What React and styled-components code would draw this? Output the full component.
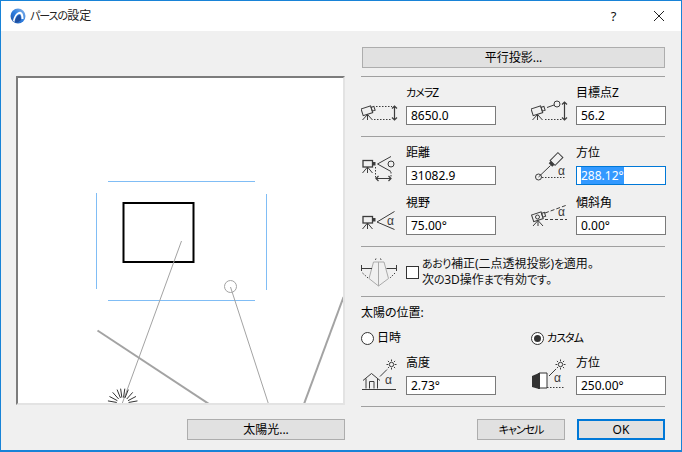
import React, { useEffect, useRef } from "react";
import styled, { createGlobalStyle } from "styled-components";

const Global = createGlobalStyle`
  html, body { margin: 0; padding: 0; background: #f0f0f0; }
  * { box-sizing: border-box; }
  body { font-family: "Noto Sans", "Noto Sans CJK JP", sans-serif; font-size: 12px; color: #000; font-feature-settings: "palt"; }
`;

const Window = styled.div`
  width: 682px; height: 452px; border: 1px solid #1883d7; border-bottom-width: 2px;
  display: flex; flex-direction: column; background: #f0f0f0; overflow: hidden;
`;
const TitleBar = styled.header`
  height: 30px; background: #fff; display: flex; align-items: center; flex: none; padding-left: 9px;
`;
const Title = styled.span`
  margin-left: 4px; flex: 1; color: #222; line-height: 16px;
`;
const Kana = styled.span`
  font-size: 11px; letter-spacing: ${p => p.$s ?? -1}px;
`;
const WinButton = styled.button`
  width: 45px; height: 30px; border: 0; background: none; padding: 0; display: flex;
  align-items: center; justify-content: center; font: inherit; font-size: 13px; color: #111;
`;
const Body = styled.div`
  flex: 1; display: flex; min-height: 0;
`;
const LeftColumn = styled.section`
  width: 344px; flex: none; padding: 45px 0 0 15px; display: flex; flex-direction: column;
`;
const Preview = styled.div`
  width: 329px; height: 329px; background: #fff; border: 2px solid;
  border-color: #7c7c7c #e3e3e3 #e3e3e3 #7c7c7c; flex: none;
  svg { display: block; }
`;
const LeftFooter = styled.div`
  margin-top: 14px; display: flex; justify-content: flex-end;
`;
const PushButton = styled.button`
  width: ${p => p.$w}px; height: 21px; flex: none; padding: 0; font: inherit; color: #000;
  background: #e1e1e1; border: ${p => (p.$primary ? "2px solid #0078d7" : "1px solid #adadad")};
  display: block; line-height: 16px;
`;
const RightColumn = styled.section`
  width: 305px; margin-left: 16px; flex: none; padding-top: 16px; display: flex; flex-direction: column;
`;
const TopButton = styled(PushButton)`
  margin-left: 1px;
`;
const Divider = styled.hr`
  width: 304px; height: 1px; border: 0; background: #a0a0a0; margin: ${p => p.$top}px 0 0; flex: none;
`;
const FieldGrid = styled.div`
  display: grid; grid-template-columns: 170px 135px; row-gap: ${p => p.$gap || 0}px;
`;
const Field = styled.div`
  display: grid; grid-template-columns: 45px 90px; grid-template-rows: ${p => p.$label || 29}px 19px;
`;
const IconSlot = styled.div`
  grid-column: 1; grid-row: 1 / 3; align-self: end; height: 40px;
  svg { display: block; }
`;
const FieldLabel = styled.label`
  grid-column: 2; grid-row: 1; align-self: end; line-height: 16px; padding-bottom: 5px;
`;
const NumberInput = styled.input`
  grid-column: 2; grid-row: 2; width: 90px; height: 19px; background: #fff; border: 1px solid #7a7a7a;
  padding: 0 3px 0 4px; font: inherit; color: #000; outline: none; border-radius: 0;
  &:focus { border-color: #0078d7; }
  &::selection { background: #3399ff; color: #fff; }
`;
const TiltRow = styled.div`
  height: 49px; display: flex; align-items: center;
  svg { display: block; flex: none; }
`;
const CheckBox = styled.span`
  width: 13px; height: 13px; border: 1px solid #333; background: #fff; flex: none; margin-left: 9px; margin-top: 1px;
`;
const TiltText = styled.div`
  margin-left: 3px; line-height: 16px; color: #111; white-space: nowrap;
`;
const SectionLabel = styled.div`
  margin-top: 8px; height: 16px; line-height: 16px;
`;
const RadioRow = styled.div`
  margin-top: 9px; display: grid; grid-template-columns: 170px 135px; height: 16px;
`;
const Radio = styled.label`
  display: flex; align-items: center; gap: 3px; line-height: 16px;
`;
const RadioMark = styled.span`
  width: 13px; height: 13px; border-radius: 50%; border: 1px solid #333; background: #fff;
  display: flex; align-items: center; justify-content: center; flex: none;
  &::after { content: ""; width: 7px; height: 7px; border-radius: 50%; background: ${p => (p.$on ? "#333" : "transparent")}; }
`;
const Footer = styled.div`
  margin-top: 12px; width: 304px; display: flex; justify-content: flex-end; gap: 12px;
`;

const stroke = { fill: "none", stroke: "#3c3c3c", strokeWidth: 1 };
const dotted = { ...stroke, strokeDasharray: "1.5 1.5" };

const Alpha = ({ x, y }) => (
  <text x={x} y={y} fontSize="12" fontFamily="Liberation Sans, sans-serif" fill="#3c3c3c" textAnchor="middle">α</text>
);

const FieldIcon = ({ x, bottom, children }) => (
  <svg width="45" height="40" viewBox={`${x} ${bottom - 40} 45 40`}>{children}</svg>
);

const Tripod = ({ x, y, h }) => (
  <g {...stroke}>
    <path d={`M${x} ${y}V${y + h}M${x} ${y}L${x - 5} ${y + h}M${x} ${y}L${x + 5} ${y + h}`} />
  </g>
);

const StraightCam = ({ y }) => (
  <g>
    <rect x="363" y={y} width="9.5" height="6.5" {...stroke} strokeWidth="1.3" />
    <rect x="373" y={y + 1.5} width="2.5" height="3.5" fill="#3c3c3c" />
    <Tripod x={367.5} y={y + 6.5} h={6} />
  </g>
);

const Arrows = ({ x, y1, y2 }) => (
  <path d={`M${x} ${y1}V${y2}M${x - 2.5} ${y1 + 2.5}L${x} ${y1}L${x + 2.5} ${y1 + 2.5}M${x - 2.5} ${y2 - 2.5}L${x} ${y2}L${x + 2.5} ${y2 - 2.5}`} {...stroke} strokeWidth="1.2" />
);

const TiltedCam = ({ x, y }) => (
  <g>
    <g transform={`rotate(-18 ${x + 6} ${y + 4})`}>
      <rect x={x} y={y} width="10" height="7" {...stroke} fill="#f0f0f0" />
      <rect x={x + 10} y={y + 1.5} width="3" height="4" {...stroke} />
    </g>
    <Tripod x={x + 5.5} y={y + 7.5} h={5.5} />
  </g>
);

const Sun = ({ cx, cy }) => (
  <g {...stroke}>
    <circle cx={cx} cy={cy} r="2.2" />
    <path d={`M${cx} ${cy - 5}V${cy - 3.2}M${cx} ${cy + 3.2}V${cy + 5}M${cx - 5} ${cy}H${cx - 3.2}M${cx + 3.2} ${cy}H${cx + 5}M${cx - 3.6} ${cy - 3.6}L${cx - 2.4} ${cy - 2.4}M${cx + 3.6} ${cy - 3.6}L${cx + 2.4} ${cy - 2.4}M${cx - 3.6} ${cy + 3.6}L${cx - 2.4} ${cy + 2.4}M${cx + 3.6} ${cy + 3.6}L${cx + 2.4} ${cy + 2.4}`} />
  </g>
);

const rays = [-80, -62, -42, -22, -8, 8, 22, 42, 62, 80].map(a => {
  const r = (a * Math.PI) / 180;
  return [Math.sin(r), -Math.cos(r)];
});

const Logo = () => (
  <svg width="16" height="16" viewBox="0 0 16 16">
    <defs>
      <linearGradient id="lg" x1="0" y1="1" x2="1" y2="0">
        <stop offset="0" stopColor="#1f4f9f" />
        <stop offset="0.5" stopColor="#2f7fe0" />
        <stop offset="1" stopColor="#8fb8e8" />
      </linearGradient>
    </defs>
    <circle cx="8" cy="8" r="7.5" fill="url(#lg)" />
    <path d="M3 13C4 7 8 3 11 4C13 5 13.5 8 13.5 11L11.5 11C11.5 8 11 6 9.5 6C7 6 5 10 4.5 14Z" fill="#fff" />
    <path d="M5 14C6 9 8 7 9.5 7C10.5 7 11 9 11 12C9 14 7 15 5 14Z" fill="#1f4f9f" />
  </svg>
);

const Scene = () => (
  <svg width="325" height="325" viewBox="18 78 325 325">
    <g stroke="#80bdf5" strokeWidth="1" fill="none">
      <path d="M108 181.5H255M108 300.5H255M96.5 193V289M266.5 194V290" />
    </g>
    <rect x="123.5" y="203" width="70" height="59" fill="none" stroke="#000" strokeWidth="2" />
    <g stroke="#a3a3a3" fill="none">
      <path d="M181.5 241L122 404" strokeWidth="1" />
      <circle cx="230.5" cy="286.5" r="6" strokeWidth="1" />
      <path d="M230.5 287L268.5 404" strokeWidth="1" />
      <path d="M97.5 330.5L209 404" strokeWidth="2" />
      <path d="M343.5 297L304 404" strokeWidth="2" />
    </g>
    <g stroke="#333" strokeWidth="1">
      {rays.map(([dx, dy], i) => (
        <line key={i} x1={122.7 + dx * 6} y1={403.5 + dy * 6} x2={122.7 + dx * 15} y2={403.5 + dy * 15} />
      ))}
    </g>
  </svg>
);

export default function App() {
  const focused = useRef(null);
  useEffect(() => {
    focused.current.focus();
    focused.current.select();
  }, []);
  return (
    <Window>
      <Global />
      <TitleBar>
        <Logo />
        <Title><Kana>パースの</Kana>設定</Title>
        <WinButton>?</WinButton>
        <WinButton>
          <svg width="12" height="12" viewBox="0 0 12 12"><path d="M1 1L11 11M11 1L1 11" stroke="#222" strokeWidth="1" /></svg>
        </WinButton>
      </TitleBar>
      <Body>
        <LeftColumn>
          <Preview><Scene /></Preview>
          <LeftFooter><PushButton $w={158}>太陽光...</PushButton></LeftFooter>
        </LeftColumn>
        <RightColumn>
          <TopButton $w={303}>平行投影...</TopButton>
          <Divider $top={8} />
          <FieldGrid>
            <Field>
              <IconSlot>
                <FieldIcon x={361} bottom={125}>
                  <TiltedCam x={362} y={107} />
                  <path d="M376 106.5H392M374 119.5H392" {...dotted} />
                  <Arrows x={394.5} y1={106} y2={120} />
                </FieldIcon>
              </IconSlot>
              <FieldLabel><Kana>カメラ</Kana>Z</FieldLabel>
              <NumberInput readOnly value="8650.0" />
            </Field>
            <Field>
              <IconSlot>
                <FieldIcon x={531} bottom={125}>
                  <TiltedCam x={532} y={107} />
                  <path d="M547 107.5L554 105" {...stroke} />
                  <circle cx="557" cy="104" r="3" {...stroke} />
                  <path d="M545 119.5H562" {...dotted} />
                  <Arrows x={564.5} y1={102} y2={120} />
                </FieldIcon>
              </IconSlot>
              <FieldLabel>目標点Z</FieldLabel>
              <NumberInput readOnly value="56.2" />
            </Field>
          </FieldGrid>
          <Divider $top={11} />
          <FieldGrid $gap={2}>
            <Field>
              <IconSlot>
                <FieldIcon x={361} bottom={185}>
                  <StraightCam y={160.5} />
                  <path d="M377.5 164L391 156.5M377.5 164L391 171.5" {...stroke} />
                  <circle cx="391" cy="164" r="3" {...stroke} />
                  <path d="M375.5 167V178M391 172V178" {...dotted} />
                  <path d="M376 178.5H391M378.5 176L376 178.5L378.5 181M388.5 176L391 178.5L388.5 181" {...stroke} strokeWidth="1.2" />
                </FieldIcon>
              </IconSlot>
              <FieldLabel>距離</FieldLabel>
              <NumberInput readOnly value="31082.9" />
            </Field>
            <Field>
              <IconSlot>
                <FieldIcon x={531} bottom={185}>
                  <circle cx="538.5" cy="177" r="3" {...stroke} />
                  <path d="M538.5 177L550.5 165.5" {...stroke} />
                  <path d="M542 177.5H566" {...dotted} />
                  <g transform="rotate(45 556.5 159)">
                    <rect x="553" y="153.5" width="7" height="11" {...stroke} fill="#f0f0f0" />
                    <rect x="554" y="164.5" width="5" height="3" fill="#3c3c3c" />
                  </g>
                  <Alpha x={561.5} y={175} />
                </FieldIcon>
              </IconSlot>
              <FieldLabel>方位</FieldLabel>
              <NumberInput ref={focused} readOnly value="288.12°" />
            </Field>
            <Field>
              <IconSlot>
                <FieldIcon x={361} bottom={235}>
                  <StraightCam y={216.5} />
                  <path d="M377 222L394.5 211.5M377 222L394.5 229.5" {...stroke} />
                  <Alpha x={390.5} y={225} />
                </FieldIcon>
              </IconSlot>
              <FieldLabel>視野</FieldLabel>
              <NumberInput readOnly value="75.00°" />
            </Field>
            <Field>
              <IconSlot>
                <FieldIcon x={531} bottom={235}>
                  <TiltedCam x={532.5} y={213} />
                  <circle cx="537.5" cy="217" r="2" {...stroke} />
                  <path d="M545 213L567 205" {...stroke} strokeDasharray="4 2" />
                  <path d="M545 219.5H567" {...stroke} strokeDasharray="3 2" />
                  <Alpha x={561.5} y={216} />
                </FieldIcon>
              </IconSlot>
              <FieldLabel>傾斜角</FieldLabel>
              <NumberInput readOnly value="0.00°" />
            </Field>
          </FieldGrid>
          <Divider $top={11} />
          <TiltRow>
            <svg width="36" height="49" viewBox="361 247 36 49">
              <path d="M378.5 286L369 278.5L373.5 262L384 262L388.5 278.5ZM378.5 262V286" fill="none" stroke="#aaa" strokeWidth="1" />
              <path d="M361.5 265V271M361.5 268.5H372M396.5 265V271M386.5 268.5H396.5" {...stroke} />
              <path d="M362.5 273L368 278M395 273L390 278M376 258.5L375 261M380.5 258.5L381.5 261" {...dotted} />
            </svg>
            <CheckBox />
            <TiltText><Kana $s={-0.5}>あおり</Kana>補正(二点透視投影)<Kana $s={-0.5}>を</Kana>適用。<br />次<Kana $s={-0.5}>の</Kana>3D操作<Kana $s={-0.5}>まで</Kana>有効<Kana $s={-0.5}>です</Kana>。</TiltText>
          </TiltRow>
          <Divider $top={0} />
          <SectionLabel>太陽の位置:</SectionLabel>
          <RadioRow>
            <Radio><RadioMark />日時</Radio>
            <Radio><RadioMark $on /><Kana>カスタム</Kana></Radio>
          </RadioRow>
          <FieldGrid>
            <Field $label={30}>
              <IconSlot>
                <FieldIcon x={361} bottom={395}>
                  <path d="M363 380.5L371.5 373.5L380 380.5M366 378.5V388.5M377.5 378.5V388.5M369.5 388.5V381.5H374V388.5M362 389.5H396" {...stroke} />
                  <path d="M380 376.5L387 369.5" {...stroke} />
                  <Sun cx={391.5} cy={364.5} />
                  <Alpha x={388.5} y={384} />
                </FieldIcon>
              </IconSlot>
              <FieldLabel>高度</FieldLabel>
              <NumberInput readOnly value="2.73°" />
            </Field>
            <Field $label={30}>
              <IconSlot>
                <FieldIcon x={531} bottom={395}>
                  <path d="M532 376L539 373V389L532 387Z" fill="#333" />
                  <path d="M539 373H547V388H539" fill="#fff" stroke="#333" strokeWidth="1" />
                  <path d="M539 373V389" stroke="#333" strokeWidth="2" />
                  <path d="M547 387.5H565" {...dotted} />
                  <path d="M549 376L556 369" {...stroke} />
                  <Sun cx={560.5} cy={364.5} />
                  <Alpha x={557.5} y={382} />
                </FieldIcon>
              </IconSlot>
              <FieldLabel>方位</FieldLabel>
              <NumberInput readOnly value="250.00°" />
            </Field>
          </FieldGrid>
          <Divider $top={11} />
          <Footer>
            <PushButton $w={88}><Kana>キャンセル</Kana></PushButton>
            <PushButton $w={88} $primary>OK</PushButton>
          </Footer>
        </RightColumn>
      </Body>
    </Window>
  );
}
